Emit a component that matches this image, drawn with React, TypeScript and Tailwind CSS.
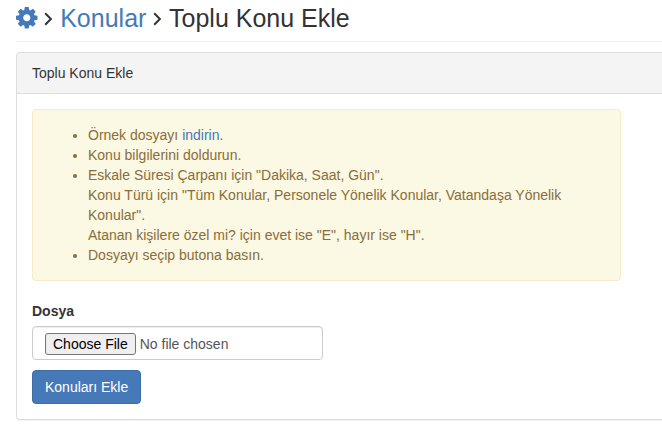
function CogIcon() {
  return (
    <svg viewBox="0 0 1536 1536" fill="currentColor" fillRule="evenodd" className="h-[21.5px] w-[21.5px]">
      <path d="M1024 768q0 106-75 181t-181 75-181-75-75-181 75-181 181-75 181 75 75 181zM1536 659v222q0 12-8 23t-20 13l-185 28q-19 54-39 91 35 50 107 138 10 12 10 25t-9 23q-27 37-99 108t-94 71q-12 0-26-9l-138-108q-44 23-91 38-16 136-29 186-7 28-36 28H657q-14 0-24.5-8.5T621 1506l-28-184q-49-16-90-37l-141 107q-10 9-25 9-14 0-25-11-126-114-165-168-7-10-7-23 0-12 8-23 15-21 51-66.5t54-70.5q-27-50-41-99L29 913q-13-2-21-12.5T0 877V655q0-12 8-23t19-13l186-28q14-46 39-92-40-57-107-138-10-12-10-24 0-10 9-23 26-36 98.5-107.5T337 135q13 0 26 10l138 107q44-23 91-38 16-136 29-186 7-28 36-28h222q14 0 24.5 8.5T915 30l28 184q49 16 90 37l142-107q9-9 24-9 13 0 25 10 129 119 165 170 7 8 7 22 0 12-8 23-15 21-51 66.5t-54 70.5q26 50 41 98l183 28q13 2 21 12.5t8 23.5z" />
    </svg>
  );
}

function AngleIcon() {
  return (
    <svg viewBox="0 0 9 14" fill="none" stroke="currentColor" strokeWidth="2" className="mt-[2px] h-[14px] w-[9px]">
      <path d="M1.2 1.3 6.9 7 1.2 12.7" />
    </svg>
  );
}

export default function App() {
  return (
    <div className="h-[446px] overflow-hidden bg-white pl-4 font-['Liberation_Sans',Arial,sans-serif] text-sm leading-5 text-[#333]">
      <h1 className="flex h-[42px] items-center gap-[6.85px] border-b border-[#eee] pb-[5px] text-[25px] leading-7 whitespace-nowrap">
        <a href="#" className="text-[#4679b8]">
          <CogIcon />
        </a>
        <AngleIcon />
        <a href="#" className="text-[#4679b8]">
          Konular
        </a>
        <AngleIcon />
        <span>Toplu Konu Ekle</span>
      </h1>

      <section className="mt-[10px] h-[368px] rounded-l border border-r-0 border-[#ddd] shadow-[0_1px_1px_rgba(0,0,0,0.05)]">
        <div className="rounded-tl-[3px] border-b border-[#ddd] bg-[#f4f4f4] px-[15px] py-[10px]">
          Toplu Konu Ekle
        </div>
        <div className="p-[15px]">
          <div className="w-[589px] rounded border border-[#f8eac8] bg-[#fbf8e3] p-[15px] text-[#8a6d3b]">
            <ul className="list-disc pl-10">
              <li>
                Örnek dosyayı{" "}
                <a href="#" className="text-[#4679b8]">
                  indirin
                </a>
                .
              </li>
              <li>Konu bilgilerini doldurun.</li>
              <li>
                Eskale Süresi Çarpanı için "Dakika, Saat, Gün".
                <br />
                Konu Türü için "Tüm Konular, Personele Yönelik Konular, Vatandaşa Yönelik Konular".
                <br />
                Atanan kişilere özel mi? için evet ise "E", hayır ise "H".
              </li>
              <li>Dosyayı seçip butona basın.</li>
            </ul>
          </div>

          <form className="mt-5">
            <label htmlFor="file" className="mb-[5px] block font-bold">
              Dosya
            </label>
            <input
              id="file"
              type="file"
              className="block h-[34px] w-[291px] rounded border border-[#ccc] px-3 py-[6px] text-[#555] shadow-[inset_0_1px_1px_rgba(0,0,0,0.075)] file:mr-1 file:rounded-[3px] file:border file:border-solid file:border-[#767676] file:bg-[#efefef] file:px-[7px] file:py-0 file:text-black"
            />
            <button
              type="button"
              className="mt-[10px] h-[34px] rounded border border-[#3f6da6] bg-[#4679b8] px-3 text-white"
            >
              Konuları Ekle
            </button>
          </form>
        </div>
      </section>
    </div>
  );
}
